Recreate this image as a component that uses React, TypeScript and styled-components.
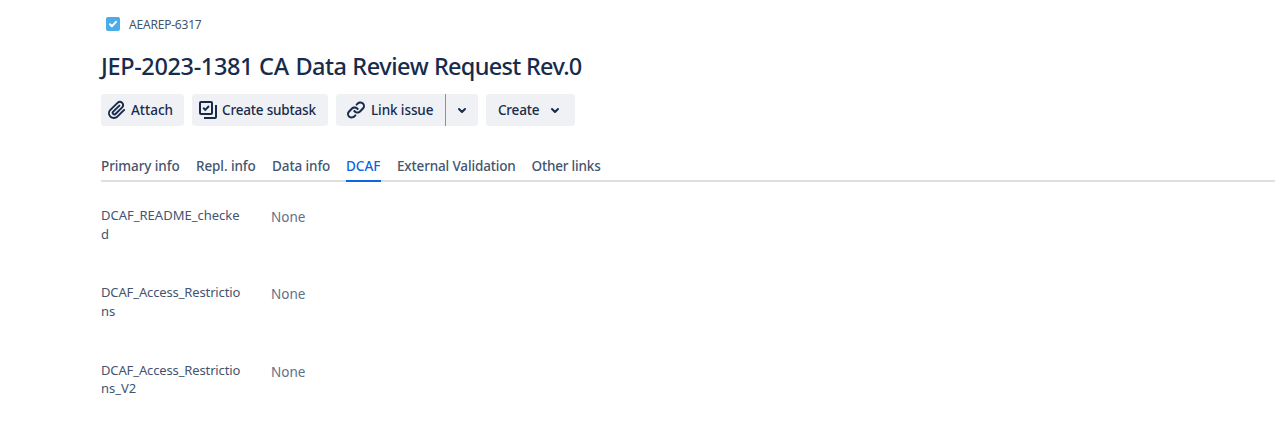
import React from "react";
import styled, { createGlobalStyle } from "styled-components";

const GlobalStyle = createGlobalStyle`
  * { box-sizing: border-box; }
  body {
    margin: 0;
    background: #fff;
    color: #172b4d;
    font-family: "Noto Sans", "Open Sans", sans-serif;
    font-size: 14px;
  }
`;

const Page = styled.main`
  height: 433px;
  padding: 14px 1px 0 101px;
  overflow: hidden;
`;

const Text = styled.span<{ $spacing?: number }>`
  letter-spacing: ${(p) => p.$spacing ?? 0}px;
  white-space: pre;
`;

const Breadcrumb = styled.div`
  display: flex;
  align-items: center;
  height: 20px;
  padding-left: 5px;
  gap: 9px;
  font-size: 12px;
  color: #44546f;
`;

const Title = styled.h1`
  margin: 18px 0 0;
  height: 28px;
  line-height: 28px;
  font-size: 23.5px;
  font-weight: 500;
  white-space: nowrap;
`;

const Toolbar = styled.div`
  display: flex;
  gap: 8px;
  margin-top: 14px;
`;

const Button = styled.button<{ $width: number; $left?: number; $gap?: number; $corners?: string }>`
  display: flex;
  align-items: center;
  width: ${(p) => p.$width}px;
  height: 32px;
  padding: 0 0 0 ${(p) => p.$left ?? 5}px;
  gap: ${(p) => p.$gap ?? 5}px;
  border: 0;
  border-radius: ${(p) => p.$corners ?? "3px"};
  background: #f0f1f4;
  color: #172b4d;
  font: 500 13.5px/32px "Noto Sans", "Open Sans", sans-serif;
  svg { flex: none; }
`;

const Split = styled.div`
  display: flex;
`;

const Divider = styled.div`
  width: 1px;
  background: #8590a2;
`;

const Tabs = styled.nav`
  display: flex;
  gap: 16px;
  height: 30px;
  margin-top: 26px;
  box-shadow: inset 0 -2px #dcdfe4;
`;

const Tab = styled.div<{ $width: number; $active?: boolean }>`
  width: ${(p) => p.$width}px;
  height: 30px;
  line-height: 28px;
  font-size: 13.5px;
  font-weight: 500;
  color: ${(p) => (p.$active ? "#0c66e4" : "#44546f")};
  border-bottom: 2px solid ${(p) => (p.$active ? "#0c66e4" : "transparent")};
`;

const Fields = styled.dl`
  display: grid;
  grid-auto-rows: 77.4px;
  margin: 24px 0 0;
`;

const Field = styled.div`
  display: grid;
  grid-template-columns: 140px 1fr;
  column-gap: 30px;
`;

const Name = styled.dt`
  font-size: 13px;
  line-height: 18.57px;
  color: #44546f;
`;

const Line = styled(Text)`
  display: block;
`;

const Value = styled.dd`
  margin: 1px 0 0;
  font-size: 13.5px;
  line-height: 20px;
  color: #626f86;
`;

const TaskIcon = () => (
  <svg width="14" height="14" viewBox="0 0 14 14">
    <rect width="14" height="14" rx="2" fill="#4bade8" />
    <path d="M4 7.2 6 9.2l4-4.4" fill="none" stroke="#fff" strokeWidth="2" strokeLinecap="round" strokeLinejoin="round" />
  </svg>
);

const AttachIcon = () => (
  <svg width="24" height="24" viewBox="0 0 24 24">
    <path
      fill="#172b4d"
      fillRule="evenodd"
      d="M11.643 17.965c-1.53 1.495-4.016 1.496-5.542.004a3.773 3.773 0 0 1 .002-5.412l7.147-6.985a2.316 2.316 0 0 1 3.233-.003c.893.873.895 2.282.004 3.153l-6.703 6.55a.653.653 0 0 1-.914-.008.62.62 0 0 1 0-.902l6.229-6.087a.941.941 0 0 0 0-1.353.995.995 0 0 0-1.384 0l-6.23 6.087a2.502 2.502 0 0 0 0 3.607 2.643 2.643 0 0 0 3.683.009l6.703-6.55a4.074 4.074 0 0 0-.003-5.859 4.306 4.306 0 0 0-6.002.003l-7.148 6.985a5.655 5.655 0 0 0-.001 8.118c2.29 2.237 6.015 2.238 8.308-.004l6.862-6.705a.941.941 0 0 0 0-1.353.995.995 0 0 0-1.384 0z"
    />
  </svg>
);

const SubtaskIcon = () => (
  <svg width="20" height="20" viewBox="0 0 20 20" fill="none" stroke="#172b4d" strokeWidth="2">
    <rect x="3" y="2" width="12" height="12" rx="1" />
    <path d="M19 5v12a1 1 0 0 1-1 1H7" />
    <path d="m6.2 7.8 2.1 2.1L12 6" />
  </svg>
);

const LinkIcon = () => (
  <svg width="24" height="24" viewBox="0 0.5 24 24" fill="#172b4d">
    <path d="M12.856 5.457l-.937.92a1.002 1.002 0 0 0 0 1.437 1.047 1.047 0 0 0 1.463 0l.984-.966c.967-.95 2.542-1.135 3.602-.288a2.54 2.54 0 0 1 .203 3.81l-2.903 2.852a2.646 2.646 0 0 1-3.696 0l-1.11-1.09L9 13.57l1.108 1.089c1.822 1.788 4.802 1.788 6.622 0l2.905-2.852a4.558 4.558 0 0 0-.357-6.82c-1.893-1.517-4.695-1.226-6.422.47" />
    <path d="M11.144 19.543l.937-.92a1.002 1.002 0 0 0 0-1.437 1.047 1.047 0 0 0-1.462 0l-.985.966c-.967.95-2.542 1.135-3.602.288a2.54 2.54 0 0 1-.203-3.81l2.903-2.852a2.646 2.646 0 0 1 3.696 0l1.11 1.09L15 11.43l-1.108-1.089c-1.822-1.788-4.802-1.788-6.622 0l-2.905 2.852a4.558 4.558 0 0 0 .357 6.82c1.893 1.517 4.695 1.226 6.422-.47" />
  </svg>
);

const Chevron = () => (
  <svg width="10" height="8" viewBox="0 0 10 8" fill="none" stroke="#172b4d" strokeWidth="2" strokeLinecap="round" strokeLinejoin="round">
    <path d="m2 3 3 3 3-3" />
  </svg>
);

const titleWords = [
  { text: "JEP-2023-1381 ", spacing: -0.36 },
  { text: "CA ", spacing: 0 },
  { text: "Data ", spacing: -0.46 },
  { text: "Review ", spacing: -0.44 },
  { text: "Request ", spacing: -0.7 },
  { text: "Rev.0", spacing: -0.7 },
];

const tabs = [
  { label: "Primary info", width: 79, spacing: -0.09 },
  { label: "Repl. info", width: 60, spacing: -0.1 },
  { label: "Data info", width: 58, spacing: -0.1 },
  { label: "DCAF", width: 35, spacing: 0, active: true },
  { label: "External Validation", width: 118.5, spacing: -0.15 },
  { label: "Other links", width: 70, spacing: -0.18 },
];

const fields = [
  [{ text: "DCAF_README_checke", spacing: 0 }, { text: "d", spacing: 0 }],
  [{ text: "DCAF_Access_Restrictio", spacing: -0.13 }, { text: "ns", spacing: 0 }],
  [{ text: "DCAF_Access_Restrictio", spacing: -0.13 }, { text: "ns_V2", spacing: 0 }],
];

export default function App() {
  return (
    <>
      <GlobalStyle />
      <Page>
        <Breadcrumb>
          <TaskIcon />
          <Text $spacing={-0.2}>AEAREP-6317</Text>
        </Breadcrumb>
        <Title>
          {titleWords.map((w) => (
            <Text key={w.text} $spacing={w.spacing}>{w.text}</Text>
          ))}
        </Title>
        <Toolbar>
          <Button $width={83} $left={4} $gap={2}>
            <AttachIcon />
            <Text>Attach</Text>
          </Button>
          <Button $width={136}>
            <SubtaskIcon />
            <Text $spacing={-0.18}>Create subtask</Text>
          </Button>
          <Split>
            <Button $width={109} $left={8} $gap={3} $corners="3px 0 0 3px">
              <LinkIcon />
              <Text $spacing={-0.1}>Link issue</Text>
            </Button>
            <Divider />
            <Button $width={32} $left={11} $corners="0 3px 3px 0" aria-label="More link options">
              <Chevron />
            </Button>
          </Split>
          <Button $width={89} $left={12} $gap={11}>
            <Text $spacing={-0.2}>Create</Text>
            <Chevron />
          </Button>
        </Toolbar>
        <Tabs>
          {tabs.map((t) => (
            <Tab key={t.label} $width={t.width} $active={t.active}>
              <Text $spacing={t.spacing}>{t.label}</Text>
            </Tab>
          ))}
        </Tabs>
        <Fields>
          {fields.map((lines, i) => (
            <Field key={i}>
              <Name>
                {lines.map((l) => (
                  <Line key={l.text} $spacing={l.spacing}>{l.text}</Line>
                ))}
              </Name>
              <Value>None</Value>
            </Field>
          ))}
        </Fields>
      </Page>
    </>
  );
}
